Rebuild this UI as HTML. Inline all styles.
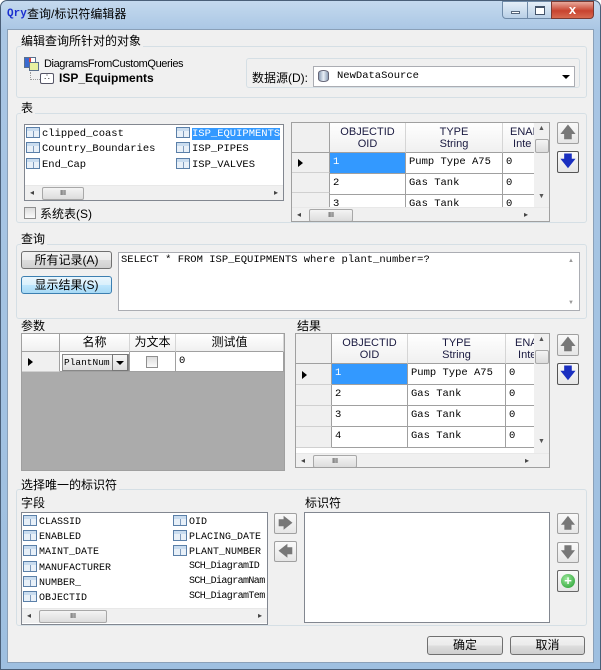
<!DOCTYPE html>
<html><head><meta charset="utf-8"><style>
*{box-sizing:border-box;margin:0;padding:0}
body{width:601px;height:670px;overflow:hidden;background:#fff;font-family:"Liberation Sans","Noto Sans CJK SC",sans-serif;font-size:12px;color:#000;position:relative}
.a{position:absolute}
.frame{left:0;top:0;width:601px;height:670px;border-radius:7px 7px 0 0;background:linear-gradient(180deg,#c4d9ee 0,#a9c6e4 30px,#9ebfe0 100%);border:1px solid #4a5f78}
.client{left:7px;top:29px;width:587px;height:634px;background:#f0f0f0;border:1px solid #8aa0b8}
.grp{border:1px solid #d5dfe5;border-radius:3px}
.lbl{font-size:12px;line-height:14px;white-space:nowrap;background:#f0f0f0;padding-right:2px}
.mono{font-family:"Liberation Mono","Noto Sans CJK SC",monospace;font-size:10.5px;white-space:nowrap}
.box{background:#fff;border:1px solid #828790}
.btn{border:1px solid #707070;border-radius:3px;background:linear-gradient(#f2f2f2 0,#ebebeb 50%,#dddddd 51%,#cfcfcf 100%);text-align:center;font-size:12px;line-height:16px}
.ib{border:1px solid #a0a0a0;border-radius:2px;background:linear-gradient(#fafafa,#e6e6e6)}
.hs{height:15px;background:#f0f0f0;border-top:1px solid #e8e8e8}
.thumb{border:1px solid #a8a8a8;border-radius:2px;background:linear-gradient(#f4f4f4,#dcdcdc);height:13px;top:1px}
.tic{display:inline-block;width:14px;height:11px;border:1px solid #5a7fa8;background:linear-gradient(#c9dcef,#c9dcef) 0 0/100% 3px no-repeat,repeating-linear-gradient(90deg,#e8f0f8 0 6px,#7f9bbd 6px 7px);vertical-align:-2px;margin-right:2px}
.gh{background:linear-gradient(#fff,#f0f0f0);border-right:1px solid #d5d5d5;border-bottom:1px solid #a0a0a0;text-align:center;font-size:11px;line-height:12px;color:#1a1a40}
.gc{border-right:1px solid #a0a0a0;border-bottom:1px solid #a0a0a0;background:#fff;padding-left:3px;line-height:19px}
.rh{background:#f0f0f0;border-right:1px solid #a0a0a0;border-bottom:1px solid #d0d0d0}
.tri{width:0;height:0;border-top:4px solid transparent;border-bottom:4px solid transparent;border-left:5px solid #000}
</style></head><body>
<div class="a frame"></div>
<!-- title -->
<div class="a" style="left:7px;top:8px;font-family:'Liberation Mono',monospace;font-size:11px;color:#1a2fd0;font-weight:bold">Qry</div>
<div class="a" style="left:27px;top:5px;font-size:12px;color:#000">查询/标识符编辑器</div>
<div class="a" style="left:502px;top:1px;width:26px;height:18px;border:1px solid #6f8aa8;border-radius:0 0 0 4px;background:linear-gradient(#e4eef8,#b9cfe6)"><div class="a" style="left:8px;top:9px;width:9px;height:3px;border:1px solid #55657a;background:#fff"></div></div>
<div class="a" style="left:527px;top:1px;width:25px;height:18px;border:1px solid #6f8aa8;background:linear-gradient(#e4eef8,#b9cfe6)"><div class="a" style="left:7px;top:4px;width:10px;height:9px;border:1px solid #44546a;border-top-width:2px;background:#fff"></div></div>
<div class="a" style="left:551px;top:1px;width:43px;height:18px;border:1px solid #7b3a32;border-radius:0 0 4px 0;background:linear-gradient(#e8a99c,#c8432f 55%,#d86a50);color:#fff;font-weight:bold;text-align:center;font-size:13px;line-height:16px">x</div>
<div class="a client"></div>

<!-- group 1 -->
<div class="a grp" style="left:16px;top:46px;width:571px;height:52px"></div>
<div class="a lbl" style="left:21px;top:34px">编辑查询所针对的对象</div>
<div class="a" style="left:24px;top:57px;width:12px;height:11px;border:1px solid #5a6f8c;background:linear-gradient(90deg,#3a6ad0 0 40%,#e04040 40% 60%,#fff 60%)"></div>
<div class="a" style="left:29px;top:62px;width:10px;height:9px;border:1px solid #5a6f8c;background:#e8f0a0"></div>
<div class="a" style="left:44px;top:58px;font-size:11px;letter-spacing:-0.4px">DiagramsFromCustomQueries</div>
<div class="a" style="left:30px;top:72px;width:10px;height:8px;border-left:1px dotted #999;border-bottom:1px dotted #999"></div>
<div class="a" style="left:40px;top:73px;width:14px;height:11px;border:1px solid #556;border-radius:2px;background:#fff;font-size:7px;line-height:8px;text-align:center">∴</div>
<div class="a" style="left:59px;top:71px;font-size:12px;font-weight:bold">ISP_Equipments</div>
<div class="a grp" style="left:246px;top:58px;width:334px;height:30px"></div>
<div class="a" style="left:252px;top:69px;font-size:12px">数据源(D):</div>
<div class="a box" style="left:313px;top:66px;width:262px;height:21px;border-color:#abadb3"></div>
<div class="a" style="left:318px;top:70px;width:11px;height:12px;border-radius:5px/3px;background:linear-gradient(90deg,#8ea0b8,#e8eef6,#8ea0b8);border:1px solid #667"></div>
<div class="a mono" style="left:337px;top:70px">NewDataSource</div>
<div class="a" style="left:562px;top:75px;border-left:4px solid transparent;border-right:4px solid transparent;border-top:4px solid #000"></div>

<!-- group 表 -->
<div class="a grp" style="left:16px;top:113px;width:571px;height:110px"></div>
<div class="a lbl" style="left:21px;top:101px">表</div>
<div class="a box" style="left:24px;top:124px;width:260px;height:77px"></div>
<div class="a mono" style="left:26px;top:127px"><span class="tic"></span>clipped_coast</div>
<div class="a mono" style="left:26px;top:142px"><span class="tic"></span>Country_Boundaries</div>
<div class="a mono" style="left:26px;top:158px"><span class="tic"></span>End_Cap</div>
<div class="a mono" style="left:176px;top:127px"><span class="tic"></span><span style="background:#3399ff;color:#fff">ISP_EQUIPMENTS</span></div>
<div class="a mono" style="left:176px;top:142px"><span class="tic"></span>ISP_PIPES</div>
<div class="a mono" style="left:176px;top:158px"><span class="tic"></span>ISP_VALVES</div>
<div class="a hs" style="left:25px;top:185px;width:258px"><div class="a" style="left:5px;top:2px;font-size:8px;color:#444">◂</div><div class="a thumb" style="left:17px;width:42px"><div style="font-size:7px;text-align:center;line-height:11px">III</div></div><div class="a" style="left:249px;top:2px;font-size:8px;color:#444">▸</div></div>
<div class="a" style="left:24px;top:207px;width:12px;height:12px;border:1px solid #8f8f8f;background:linear-gradient(#ddd,#fafafa)"></div>
<div class="a" style="left:40px;top:205px;font-size:12px">系统表(S)</div>

<!-- grid 1 -->
<div class="a box" style="left:291px;top:122px;width:259px;height:100px;overflow:hidden;border-color:#a0a0a0">
 <div class="a rh" style="left:0;top:0;width:38px;height:30px;border-bottom-color:#a0a0a0"></div>
 <div class="a gh" style="left:38px;top:0;width:76px;height:30px;padding-top:3px">OBJECTID<br>OID</div>
 <div class="a gh" style="left:114px;top:0;width:97px;height:30px;padding-top:3px">TYPE<br>String</div>
 <div class="a gh" style="left:211px;top:0;width:40px;height:30px;padding-top:3px;text-align:left;padding-left:7px">ENAB<br>&nbsp;Inte</div>
 <div class="a rh" style="left:0;top:30px;width:38px;height:20px"><div class="a tri" style="left:6px;top:6px"></div></div>
 <div class="a rh" style="left:0;top:50px;width:38px;height:20px"></div>
 <div class="a rh" style="left:0;top:70px;width:38px;height:20px"></div>
 <div class="a gc mono" style="left:38px;top:30px;width:76px;height:21px;background:#3399ff;color:#fff">1</div>
 <div class="a gc mono" style="left:114px;top:30px;width:97px;height:21px">Pump Type A75</div>
 <div class="a gc mono" style="left:211px;top:30px;width:40px;height:21px">0</div>
 <div class="a gc mono" style="left:38px;top:51px;width:76px;height:21px">2</div>
 <div class="a gc mono" style="left:114px;top:51px;width:97px;height:21px">Gas Tank</div>
 <div class="a gc mono" style="left:211px;top:51px;width:40px;height:21px">0</div>
 <div class="a gc mono" style="left:38px;top:72px;width:76px;height:21px">3</div>
 <div class="a gc mono" style="left:114px;top:72px;width:97px;height:21px">Gas Tank</div>
 <div class="a gc mono" style="left:211px;top:72px;width:40px;height:21px">0</div>
 <div class="a" style="left:242px;top:0;width:16px;height:84px;background:#f0f0f0"><div class="a" style="left:4px;top:2px;font-size:7px;color:#555">▲</div><div class="a thumb" style="left:1px;top:16px;width:14px;height:14px"></div><div class="a" style="left:4px;top:70px;font-size:7px;color:#555">▼</div></div>
 <div class="a hs" style="left:0;top:84px;width:258px"><div class="a" style="left:5px;top:2px;font-size:8px;color:#444">◂</div><div class="a thumb" style="left:17px;width:44px"><div style="font-size:7px;text-align:center;line-height:11px">III</div></div><div class="a" style="left:232px;top:2px;font-size:8px;color:#444">▸</div></div>
</div>
<div class="a ib" style="left:557px;top:122px;width:22px;height:22px;color:#777;font-size:15px;text-align:center;line-height:20px;font-weight:bold">🡅</div>
<div class="a ib" style="left:557px;top:151px;width:22px;height:22px;border-color:#555;color:#1a2fc0;font-size:15px;text-align:center;line-height:20px;font-weight:bold">🡇</div>

<!-- query -->
<div class="a grp" style="left:16px;top:244px;width:571px;height:75px"></div>
<div class="a lbl" style="left:21px;top:232px">查询</div>
<div class="a btn" style="left:21px;top:251px;width:91px;height:18px">所有记录(A)</div>
<div class="a btn" style="left:21px;top:276px;width:91px;height:18px;border-color:#3c7fb1;background:linear-gradient(#eaf6fd,#d9f0fc 50%,#bee6fd 51%,#a7d9f5)">显示结果(S)</div>
<div class="a box" style="left:118px;top:252px;width:462px;height:59px;border-color:#abadb3"></div>
<div class="a mono" style="left:121px;top:254px">SELECT * FROM ISP_EQUIPMENTS where plant_number=?</div>
<div class="a" style="left:568px;top:258px;font-size:6px;color:#999">▲</div>
<div class="a" style="left:568px;top:300px;font-size:6px;color:#999">▼</div>

<!-- params -->
<div class="a lbl" style="left:21px;top:319px">参数</div>
<div class="a" style="left:21px;top:333px;width:264px;height:138px;background:#ababab;border:1px solid #a0a0a0">
 <div class="a rh" style="left:0;top:0;width:38px;height:18px;background:linear-gradient(#fff,#f0f0f0);border-bottom-color:#a0a0a0"></div>
 <div class="a gh" style="left:38px;top:0;width:70px;height:18px;font-size:12px;line-height:17px;color:#000">名称</div>
 <div class="a gh" style="left:108px;top:0;width:46px;height:18px;font-size:12px;line-height:17px;color:#000">为文本</div>
 <div class="a gh" style="left:154px;top:0;width:108px;height:18px;font-size:12px;line-height:17px;color:#000">测试值</div>
 <div class="a rh" style="left:0;top:18px;width:38px;height:20px;background:#f0f0f0"><div class="a tri" style="left:6px;top:6px"></div></div>
 <div class="a gc" style="left:38px;top:18px;width:70px;height:20px;padding:0"><div class="a mono" style="left:2px;top:2px;width:67px;height:17px;border:1px solid #888;background:linear-gradient(#f8f8f8,#e0e0e0);font-size:9.5px;line-height:15px;padding-left:1px">PlantNum</div><div class="a" style="left:52px;top:2px;width:16px;height:17px;border:1px solid #777;background:linear-gradient(#f8f8f8,#ddd)"><div class="a" style="left:3px;top:6px;border-left:4px solid transparent;border-right:4px solid transparent;border-top:4px solid #000"></div></div></div>
 <div class="a gc" style="left:108px;top:18px;width:46px;height:20px"><div class="a" style="left:16px;top:4px;width:12px;height:12px;border:1px solid #8f8f8f;background:linear-gradient(#ddd,#fafafa)"></div></div>
 <div class="a gc mono" style="left:154px;top:18px;width:108px;height:20px">0</div>
</div>

<!-- results -->
<div class="a lbl" style="left:297px;top:319px">结果</div>
<div class="a box" style="left:295px;top:333px;width:255px;height:135px;overflow:hidden;border-color:#a0a0a0">
 <div class="a rh" style="left:0;top:0;width:36px;height:30px;border-bottom-color:#a0a0a0"></div>
 <div class="a gh" style="left:36px;top:0;width:76px;height:30px;padding-top:3px">OBJECTID<br>OID</div>
 <div class="a gh" style="left:112px;top:0;width:98px;height:30px;padding-top:3px">TYPE<br>String</div>
 <div class="a gh" style="left:210px;top:0;width:40px;height:30px;padding-top:3px;text-align:left;padding-left:9px">ENA<br>&nbsp;Inte</div>
 <div class="a rh" style="left:0;top:30px;width:36px;height:21px"><div class="a tri" style="left:6px;top:7px"></div></div>
 <div class="a rh" style="left:0;top:51px;width:36px;height:21px"></div>
 <div class="a rh" style="left:0;top:72px;width:36px;height:21px"></div>
 <div class="a rh" style="left:0;top:93px;width:36px;height:21px"></div>
 <div class="a gc mono" style="left:36px;top:30px;width:76px;height:21px;background:#3399ff;color:#fff">1</div>
 <div class="a gc mono" style="left:112px;top:30px;width:98px;height:21px">Pump Type A75</div>
 <div class="a gc mono" style="left:210px;top:30px;width:40px;height:21px">0</div>
 <div class="a gc mono" style="left:36px;top:51px;width:76px;height:21px">2</div>
 <div class="a gc mono" style="left:112px;top:51px;width:98px;height:21px">Gas Tank</div>
 <div class="a gc mono" style="left:210px;top:51px;width:40px;height:21px">0</div>
 <div class="a gc mono" style="left:36px;top:72px;width:76px;height:21px">3</div>
 <div class="a gc mono" style="left:112px;top:72px;width:98px;height:21px">Gas Tank</div>
 <div class="a gc mono" style="left:210px;top:72px;width:40px;height:21px">0</div>
 <div class="a gc mono" style="left:36px;top:93px;width:76px;height:21px">4</div>
 <div class="a gc mono" style="left:112px;top:93px;width:98px;height:21px">Gas Tank</div>
 <div class="a gc mono" style="left:210px;top:93px;width:40px;height:21px">0</div>
 <div class="a" style="left:238px;top:0;width:16px;height:119px;background:#f0f0f0"><div class="a" style="left:4px;top:2px;font-size:7px;color:#555">▲</div><div class="a thumb" style="left:1px;top:16px;width:14px;height:14px"></div><div class="a" style="left:4px;top:104px;font-size:7px;color:#555">▼</div></div>
 <div class="a hs" style="left:0;top:119px;width:254px"><div class="a" style="left:5px;top:2px;font-size:8px;color:#444">◂</div><div class="a thumb" style="left:17px;width:44px"><div style="font-size:7px;text-align:center;line-height:11px">III</div></div><div class="a" style="left:229px;top:2px;font-size:8px;color:#444">▸</div></div>
</div>
<div class="a ib" style="left:557px;top:334px;width:22px;height:22px;color:#777;font-size:15px;text-align:center;line-height:20px;font-weight:bold">🡅</div>
<div class="a ib" style="left:557px;top:363px;width:22px;height:22px;border-color:#555;color:#1a2fc0;font-size:15px;text-align:center;line-height:20px;font-weight:bold">🡇</div>

<!-- unique identifier -->
<div class="a grp" style="left:16px;top:489px;width:571px;height:137px"></div>
<div class="a lbl" style="left:21px;top:478px">选择唯一的标识符</div>
<div class="a lbl" style="left:21px;top:496px">字段</div>
<div class="a box" style="left:21px;top:512px;width:247px;height:113px"></div>
<div class="a mono" style="left:23px;top:515px;font-size:10px"><span class="tic"></span>CLASSID</div>
<div class="a mono" style="left:23px;top:530px;font-size:10px"><span class="tic"></span>ENABLED</div>
<div class="a mono" style="left:23px;top:545px;font-size:10px"><span class="tic"></span>MAINT_DATE</div>
<div class="a mono" style="left:23px;top:561px;font-size:10px"><span class="tic"></span>MANUFACTURER</div>
<div class="a mono" style="left:23px;top:576px;font-size:10px"><span class="tic"></span>NUMBER_</div>
<div class="a mono" style="left:23px;top:591px;font-size:10px"><span class="tic"></span>OBJECTID</div>
<div class="a mono" style="left:173px;top:515px;font-size:10px"><span class="tic"></span>OID</div>
<div class="a mono" style="left:173px;top:530px;font-size:10px"><span class="tic"></span>PLACING_DATE</div>
<div class="a mono" style="left:173px;top:545px;font-size:10px"><span class="tic"></span>PLANT_NUMBER</div>
<div class="a mono" style="left:189px;top:561px;font-size:10px;letter-spacing:-0.6px">SCH_DiagramID</div>
<div class="a mono" style="left:189px;top:576px;font-size:10px;letter-spacing:-0.6px">SCH_DiagramNam</div>
<div class="a mono" style="left:189px;top:591px;font-size:10px;letter-spacing:-0.6px">SCH_DiagramTem</div>
<div class="a hs" style="left:22px;top:608px;width:245px"><div class="a" style="left:5px;top:2px;font-size:8px;color:#444">◂</div><div class="a thumb" style="left:17px;width:68px"><div style="font-size:7px;text-align:center;line-height:11px">III</div></div><div class="a" style="left:236px;top:2px;font-size:8px;color:#444">▸</div></div>
<div class="a ib" style="left:274px;top:513px;width:23px;height:21px;color:#777;font-size:14px;text-align:center;line-height:19px;font-weight:bold">🡆</div>
<div class="a ib" style="left:274px;top:541px;width:23px;height:21px;color:#777;font-size:14px;text-align:center;line-height:19px;font-weight:bold">🡄</div>
<div class="a lbl" style="left:305px;top:496px">标识符</div>
<div class="a box" style="left:304px;top:512px;width:246px;height:111px"></div>
<div class="a ib" style="left:557px;top:513px;width:22px;height:21px;color:#777;font-size:14px;text-align:center;line-height:19px;font-weight:bold">🡅</div>
<div class="a ib" style="left:557px;top:542px;width:22px;height:21px;color:#777;font-size:14px;text-align:center;line-height:19px;font-weight:bold">🡇</div>
<div class="a ib" style="left:557px;top:570px;width:22px;height:22px;border-color:#666"><div class="a" style="left:3px;top:3px;width:14px;height:14px;border-radius:50%;background:radial-gradient(circle at 40% 35%,#9be89b,#1e9a2a);color:#fff;font-weight:bold;font-size:13px;line-height:13px;text-align:center">+</div></div>

<!-- ok cancel -->
<div class="a btn" style="left:427px;top:636px;width:76px;height:19px;line-height:17px">确定</div>
<div class="a btn" style="left:510px;top:636px;width:75px;height:19px;line-height:17px">取消</div>
</body></html>
